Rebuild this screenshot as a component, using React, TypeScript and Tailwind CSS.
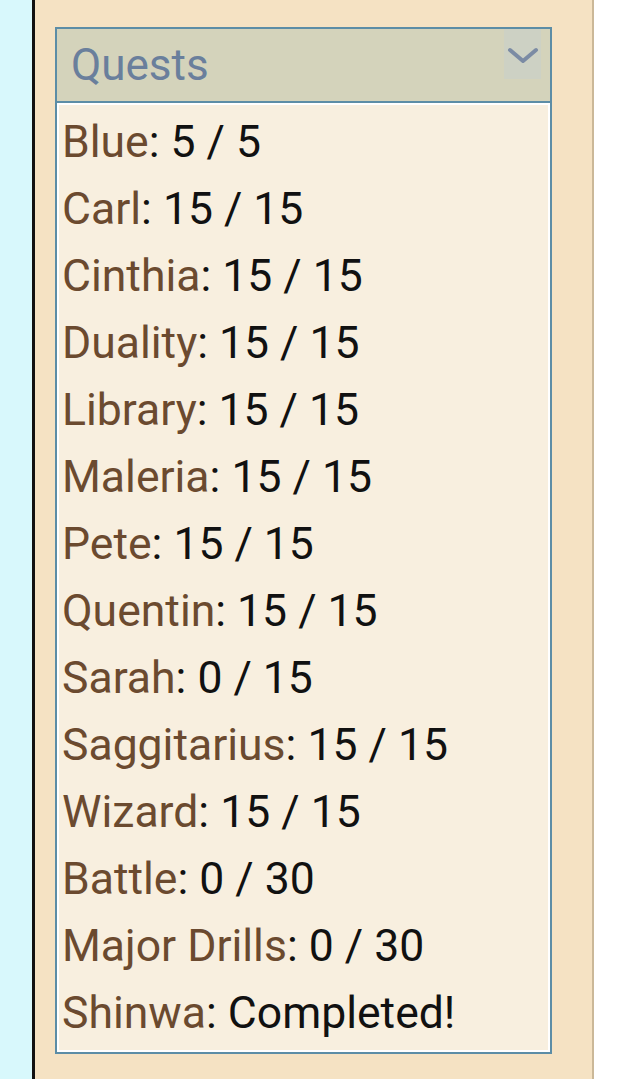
const quests: { name: string; value: string }[] = [
  { name: 'Blue', value: '5 / 5' },
  { name: 'Carl', value: '15 / 15' },
  { name: 'Cinthia', value: '15 / 15' },
  { name: 'Duality', value: '15 / 15' },
  { name: 'Library', value: '15 / 15' },
  { name: 'Maleria', value: '15 / 15' },
  { name: 'Pete', value: '15 / 15' },
  { name: 'Quentin', value: '15 / 15' },
  { name: 'Sarah', value: '0 / 15' },
  { name: 'Saggitarius', value: '15 / 15' },
  { name: 'Wizard', value: '15 / 15' },
  { name: 'Battle', value: '0 / 30' },
  { name: 'Major Drills', value: '0 / 30' },
  { name: 'Shinwa', value: 'Completed!' },
];

export default function App() {
  return (
    <div className="flex h-[1079px] w-[626px] overflow-hidden font-['Roboto',sans-serif]">
      {/* left sidebar strip */}
      <div className="w-[32px] bg-[#d8f8fc]" />
      <div className="w-[3px] bg-[#111]" />

      <div className="w-[557px] bg-[#f5e2c3] pl-[20px] pt-[27px]">
        <div className="w-[497px] border-2 border-[#5c8da6]">
          <div className="flex h-[74px] items-center justify-between border-b-2 border-[#5c8da6] bg-[#d4d3bb] pl-[14px] pr-[9px]">
            <span className="text-[44px] leading-none text-[#6a7f9c]">Quests</span>
            <div className="flex h-[50px] w-[37px] self-start justify-center bg-[#cdd1c4] pt-[18px]">
              <svg width="32" height="18" viewBox="0 0 32 18" fill="none">
                <path
                  d="M3 3 L16 14 L29 3"
                  stroke="#7b8ba4"
                  strokeWidth="4"
                  strokeLinecap="round"
                  strokeLinejoin="round"
                />
              </svg>
            </div>
          </div>

          <div className="border-2 border-white bg-[#f8efdf] pb-[3px] pl-[3px] pt-[4px]">
            {quests.map((q) => (
              <div key={q.name} className="text-[44.5px] leading-[67px] whitespace-nowrap">
                <span className="text-[#6b4a2f]">{q.name}</span>
                <span className="text-[#111]">: {q.value}</span>
              </div>
            ))}
          </div>
        </div>
      </div>

      <div className="w-[2px] bg-[#cbb898]" />
      <div className="flex-1 bg-white" />
    </div>
  );
}
